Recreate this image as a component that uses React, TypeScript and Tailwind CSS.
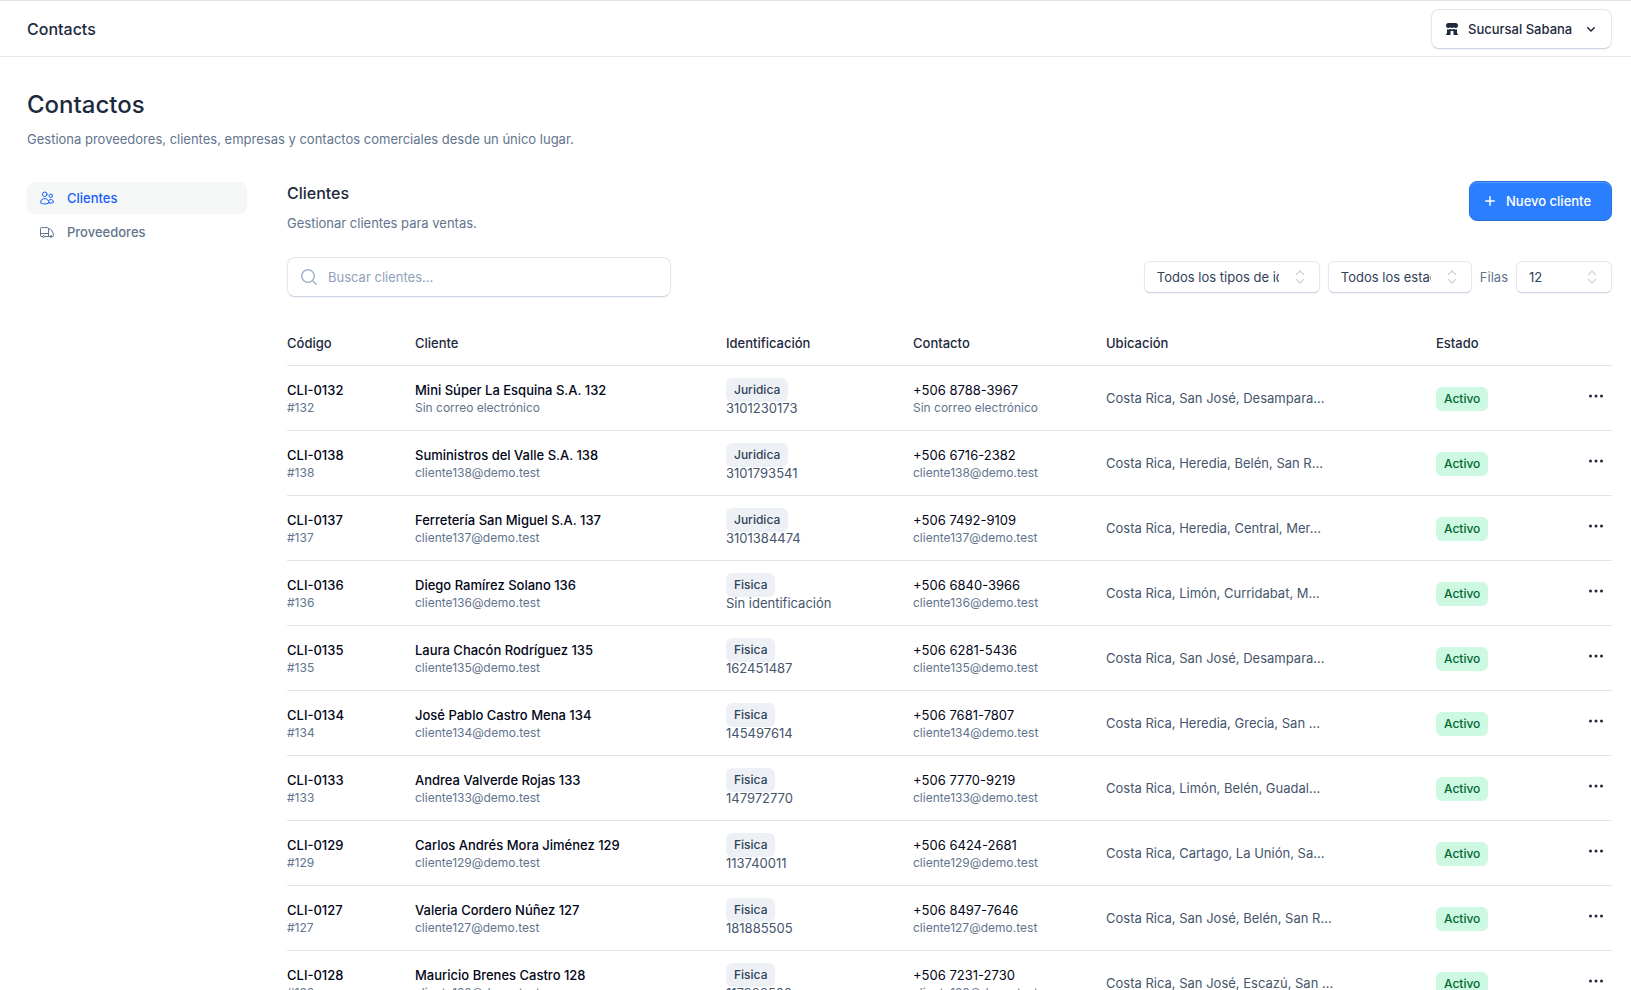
import type { ReactNode } from "react";
import clsx from "clsx";
import {
  HiMiniMagnifyingGlass,
  HiOutlineTruck,
  HiOutlineUsers,
} from "react-icons/hi2";

type Client = {
  id: number;
  name: string;
  email?: string;
  type: "Juridica" | "Fisica";
  document?: string;
  phone: string;
  location: string;
};

const clients: Client[] = [
  { id: 132, name: "Mini Súper La Esquina S.A.", type: "Juridica", document: "3101230173", phone: "+506 8788-3967", location: "Costa Rica, San José, Desampara..." },
  { id: 138, name: "Suministros del Valle S.A.", email: "cliente138@demo.test", type: "Juridica", document: "3101793541", phone: "+506 6716-2382", location: "Costa Rica, Heredia, Belén, San R..." },
  { id: 137, name: "Ferretería San Miguel S.A.", email: "cliente137@demo.test", type: "Juridica", document: "3101384474", phone: "+506 7492-9109", location: "Costa Rica, Heredia, Central, Mer..." },
  { id: 136, name: "Diego Ramírez Solano", email: "cliente136@demo.test", type: "Fisica", phone: "+506 6840-3966", location: "Costa Rica, Limón, Curridabat, M..." },
  { id: 135, name: "Laura Chacón Rodríguez", email: "cliente135@demo.test", type: "Fisica", document: "162451487", phone: "+506 6281-5436", location: "Costa Rica, San José, Desampara..." },
  { id: 134, name: "José Pablo Castro Mena", email: "cliente134@demo.test", type: "Fisica", document: "145497614", phone: "+506 7681-7807", location: "Costa Rica, Heredia, Grecia, San ..." },
  { id: 133, name: "Andrea Valverde Rojas", email: "cliente133@demo.test", type: "Fisica", document: "147972770", phone: "+506 7770-9219", location: "Costa Rica, Limón, Belén, Guadal..." },
  { id: 129, name: "Carlos Andrés Mora Jiménez", email: "cliente129@demo.test", type: "Fisica", document: "113740011", phone: "+506 6424-2681", location: "Costa Rica, Cartago, La Unión, Sa..." },
  { id: 127, name: "Valeria Cordero Núñez", email: "cliente127@demo.test", type: "Fisica", document: "181885505", phone: "+506 8497-7646", location: "Costa Rica, San José, Belén, San R..." },
  { id: 128, name: "Mauricio Brenes Castro", email: "cliente128@demo.test", type: "Fisica", document: "117983502", phone: "+506 7231-2730", location: "Costa Rica, San José, Escazú, San ..." },
];

const navItems = [
  { label: "Clientes", icon: HiOutlineUsers, current: true },
  { label: "Proveedores", icon: HiOutlineTruck, current: false },
];

function StorefrontIcon() {
  return (
    <svg viewBox="0 0 16 16" fill="currentColor" className="size-4 shrink-0" aria-hidden="true">
      <path d="M4.5 7c.681 0 1.3-.273 1.75-.715C6.7 6.727 7.319 7 8 7s1.3-.273 1.75-.715A2.5 2.5 0 1 0 11.5 2h-7a2.5 2.5 0 0 0 0 5Z" />
      <path d="M6.25 8.097A3.986 3.986 0 0 1 4.5 8.5c-.53 0-1.037-.103-1.5-.29v4.29h-.25a.75.75 0 0 0 0 1.5h.5a.754.754 0 0 0 .138-.013A.5.5 0 0 0 3.5 14H6a.5.5 0 0 0 .5-.5v-3A.5.5 0 0 1 7 10h2a.5.5 0 0 1 .5.5v3a.5.5 0 0 0 .5.5h2.5a.5.5 0 0 0 .112-.013c.045.009.09.013.138.013h.5a.75.75 0 1 0 0-1.5H13V8.21c-.463.187-.97.29-1.5.29a3.986 3.986 0 0 1-1.75-.403A3.986 3.986 0 0 1 8 8.5a3.986 3.986 0 0 1-1.75-.403Z" />
    </svg>
  );
}

function ChevronDownIcon() {
  return (
    <svg viewBox="0 0 16 16" fill="currentColor" className="size-4 shrink-0" aria-hidden="true">
      <path d="M4.22 6.22a.75.75 0 0 1 1.06 0L8 8.94l2.72-2.72a.75.75 0 1 1 1.06 1.06l-3.25 3.25a.75.75 0 0 1-1.06 0L4.22 7.28a.75.75 0 0 1 0-1.06Z" />
    </svg>
  );
}

function PlusIcon() {
  return (
    <svg viewBox="0 0 16 16" fill="currentColor" className="size-4 shrink-0" aria-hidden="true">
      <path d="M8.75 3.75a.75.75 0 0 0-1.5 0v3.5h-3.5a.75.75 0 0 0 0 1.5h3.5v3.5a.75.75 0 0 0 1.5 0v-3.5h3.5a.75.75 0 0 0 0-1.5h-3.5v-3.5Z" />
    </svg>
  );
}

function DotsIcon() {
  return (
    <svg viewBox="0 0 20 20" fill="currentColor" className="size-5" aria-hidden="true">
      <circle cx="4.5" cy="10" r="1.5" />
      <circle cx="10" cy="10" r="1.5" />
      <circle cx="15.5" cy="10" r="1.5" />
    </svg>
  );
}

type SelectProps = {
  label: string;
  options: string[];
  className: string;
  id?: string;
};

function Select({ label, options, className, id }: SelectProps) {
  return (
    <div className={clsx("relative", className)}>
      <select
        id={id}
        aria-label={label}
        className="h-8 w-full appearance-none rounded-md border border-slate-200 border-b-slate-300 bg-white pr-10 pl-3 text-slate-700 shadow-xs"
      >
        {options.map((option) => (
          <option key={option}>{option}</option>
        ))}
      </select>
      <svg
        viewBox="0 0 16 16"
        fill="none"
        stroke="currentColor"
        strokeWidth="1.3"
        strokeLinecap="round"
        strokeLinejoin="round"
        className="pointer-events-none absolute top-2 right-3 size-4 text-zinc-300"
        aria-hidden="true"
      >
        <path d="M4.5 5.5 8 2l3.5 3.5M4.5 10.5 8 14l3.5-3.5" />
      </svg>
    </div>
  );
}

function Th({ children, className }: { children?: ReactNode; className?: string }) {
  return (
    <th scope="col" className={clsx("py-3 text-left font-medium text-slate-800", className)}>
      {children}
    </th>
  );
}

export default function App() {
  return (
    <div className="min-h-screen bg-white font-['Inter',sans-serif] text-[13px] leading-5 text-slate-800">
      <header className="flex h-[57px] items-center justify-between border-t border-b border-t-zinc-200 border-b-slate-200 pr-[19px] pl-[27px]">
        <span className="text-base font-medium">Contacts</span>
        <button
          type="button"
          className="flex h-10 min-w-[181px] items-center gap-2 rounded-lg border border-slate-200 border-b-slate-300 bg-white px-3 font-medium shadow-xs"
        >
          <StorefrontIcon />
          <span className="mr-auto">Sucursal Sabana</span>
          <ChevronDownIcon />
        </button>
      </header>

      <main className="pt-8 pr-[19px] pl-[27px]">
        <h1 className="text-2xl leading-8 font-medium">Contactos</h1>
        <p className="mt-2 text-slate-500">
          Gestiona proveedores, clientes, empresas y contactos comerciales desde un único lugar.
        </p>

        <div className="mt-8 flex items-start gap-10">
          <nav className="w-[220px] shrink-0" aria-label="Contactos">
            {navItems.map(({ label, icon: Icon, current }) => (
              <a
                key={label}
                href="#"
                aria-current={current ? "page" : undefined}
                className={clsx(
                  "my-px flex h-8 items-center gap-3 rounded-lg px-3 font-medium",
                  current ? "bg-[#f5f7f7] text-blue-600" : "mt-0.5 text-slate-500",
                )}
              >
                <Icon className="size-4" />
                {label}
              </a>
            ))}
          </nav>

          <section className="min-w-0 flex-1">
            <div className="flex items-start justify-between">
              <div>
                <h2 className="text-base leading-6 font-medium">Clientes</h2>
                <p className="mt-2 text-slate-500">Gestionar clientes para ventas.</p>
              </div>
              <button
                type="button"
                className="flex h-10 min-w-[143px] items-center gap-2 rounded-lg border border-[#2670e0] bg-[#2b7fff] pr-4 pl-3 font-medium text-white inset-shadow-[0_1px_rgb(255_255_255/0.2)]"
              >
                <PlusIcon />
                Nuevo cliente
              </button>
            </div>

            <div className="mt-6 flex items-center justify-between">
              <div className="relative w-96">
                <HiMiniMagnifyingGlass className="pointer-events-none absolute top-2.5 left-3 size-5 text-slate-400/80" />
                <input
                  type="search"
                  aria-label="Buscar clientes"
                  placeholder="Buscar clientes..."
                  className="h-10 w-full rounded-lg border border-slate-200 border-b-slate-300 bg-transparent pr-3 pl-10 shadow-xs placeholder:text-slate-400"
                />
              </div>
              <div className="flex items-center gap-2">
                <Select
                  label="Tipo de identificación"
                  className="w-44"
                  options={["Todos los tipos de identificación", "Fisica", "Juridica"]}
                />
                <Select
                  label="Estado"
                  className="w-36"
                  options={["Todos los estados", "Activo", "Inactivo"]}
                />
                <label htmlFor="rows" className="text-slate-500">
                  Filas
                </label>
                <Select id="rows" label="Filas" className="w-24" options={["12", "24", "48"]} />
              </div>
            </div>

            <table className="mt-6 w-full table-fixed">
              <thead>
                <tr className="border-b border-zinc-200">
                  <Th className="w-32">Código</Th>
                  <Th className="w-[311px]">Cliente</Th>
                  <Th className="w-[187px]">Identificación</Th>
                  <Th className="w-[193px]">Contacto</Th>
                  <Th>Ubicación</Th>
                  <Th className="w-24">Estado</Th>
                  <Th className="w-20" />
                </tr>
              </thead>
              <tbody>
                {clients.map((client) => (
                  <tr key={client.id} className="border-b border-zinc-200">
                    <td className="py-3">
                      <div className="font-medium text-slate-950">CLI-0{client.id}</div>
                      <div className="text-xs text-slate-500">#{client.id}</div>
                    </td>
                    <td className="py-3">
                      <div className="font-medium text-slate-950">
                        {client.name} {client.id}
                      </div>
                      <div className="text-xs text-slate-500">
                        {client.email ?? "Sin correo electrónico"}
                      </div>
                    </td>
                    <td className="py-3">
                      <div className="-mb-1 flex h-6 w-fit items-center rounded-md bg-[#edf1f5] px-2 text-xs font-medium text-slate-700">
                        {client.type}
                      </div>
                      <div className="text-slate-600">{client.document ?? "Sin identificación"}</div>
                    </td>
                    <td className="py-3">
                      <div className="text-slate-950">{client.phone}</div>
                      <div className="text-xs text-slate-500">
                        {client.email ?? "Sin correo electrónico"}
                      </div>
                    </td>
                    <td className="py-3 text-slate-600">{client.location}</td>
                    <td className="py-3">
                      <div className="mt-0.5 flex h-6 w-fit items-center rounded-md bg-[#cdf8e1] px-2 text-xs font-medium text-green-800">
                        Activo
                      </div>
                    </td>
                    <td>
                      <button
                        type="button"
                        aria-label={`Acciones de ${client.name}`}
                        className="-mt-1 ml-auto flex size-8 items-center justify-center rounded-md"
                      >
                        <DotsIcon />
                      </button>
                    </td>
                  </tr>
                ))}
              </tbody>
            </table>
          </section>
        </div>
      </main>
    </div>
  );
}
